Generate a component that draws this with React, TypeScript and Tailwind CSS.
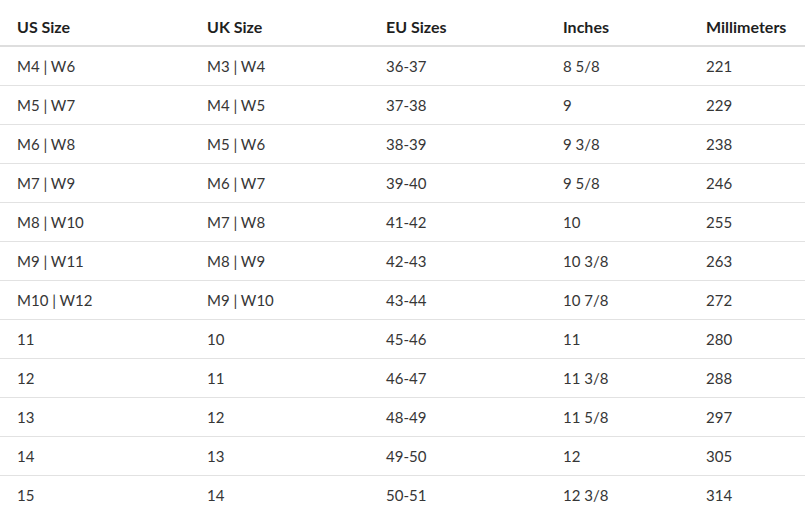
import React from 'react';

const headers = ['US Size', 'UK Size', 'EU Sizes', 'Inches', 'Millimeters'];

const rows = [
  ['M4 | W6', 'M3 | W4', '36-37', '8 5/8', '221'],
  ['M5 | W7', 'M4 | W5', '37-38', '9', '229'],
  ['M6 | W8', 'M5 | W6', '38-39', '9 3/8', '238'],
  ['M7 | W9', 'M6 | W7', '39-40', '9 5/8', '246'],
  ['M8 | W10', 'M7 | W8', '41-42', '10', '255'],
  ['M9 | W11', 'M8 | W9', '42-43', '10 3/8', '263'],
  ['M10 | W12', 'M9 | W10', '43-44', '10 7/8', '272'],
  ['11', '10', '45-46', '11', '280'],
  ['12', '11', '46-47', '11 3/8', '288'],
  ['13', '12', '48-49', '11 5/8', '297'],
  ['14', '13', '49-50', '12', '305'],
  ['15', '14', '50-51', '12 3/8', '314'],
];

const cols = 'grid grid-cols-[190px_179px_177px_143px_1fr]';

export default function App() {
  return (
    <div className="w-[805px] h-[530px] bg-white font-['Lato',sans-serif] text-[15px]">
      <div className={`${cols} h-[47px] pt-[9px] items-center border-b-2 border-[#dedede] text-[#1f1f1f] text-[16px] font-bold`}>
        {headers.map((h) => (
          <div key={h} className="pl-[17px]">{h}</div>
        ))}
      </div>
      {rows.map((r, i) => (
        <div
          key={i}
          className={`${cols} h-[39px] items-center text-[#363636] ${i < rows.length - 1 ? 'border-b border-[#e2e2e2]' : ''}`}
        >
          {r.map((c, j) => (
            <div key={j} className="pl-[17px]">{c}</div>
          ))}
        </div>
      ))}
    </div>
  );
}
